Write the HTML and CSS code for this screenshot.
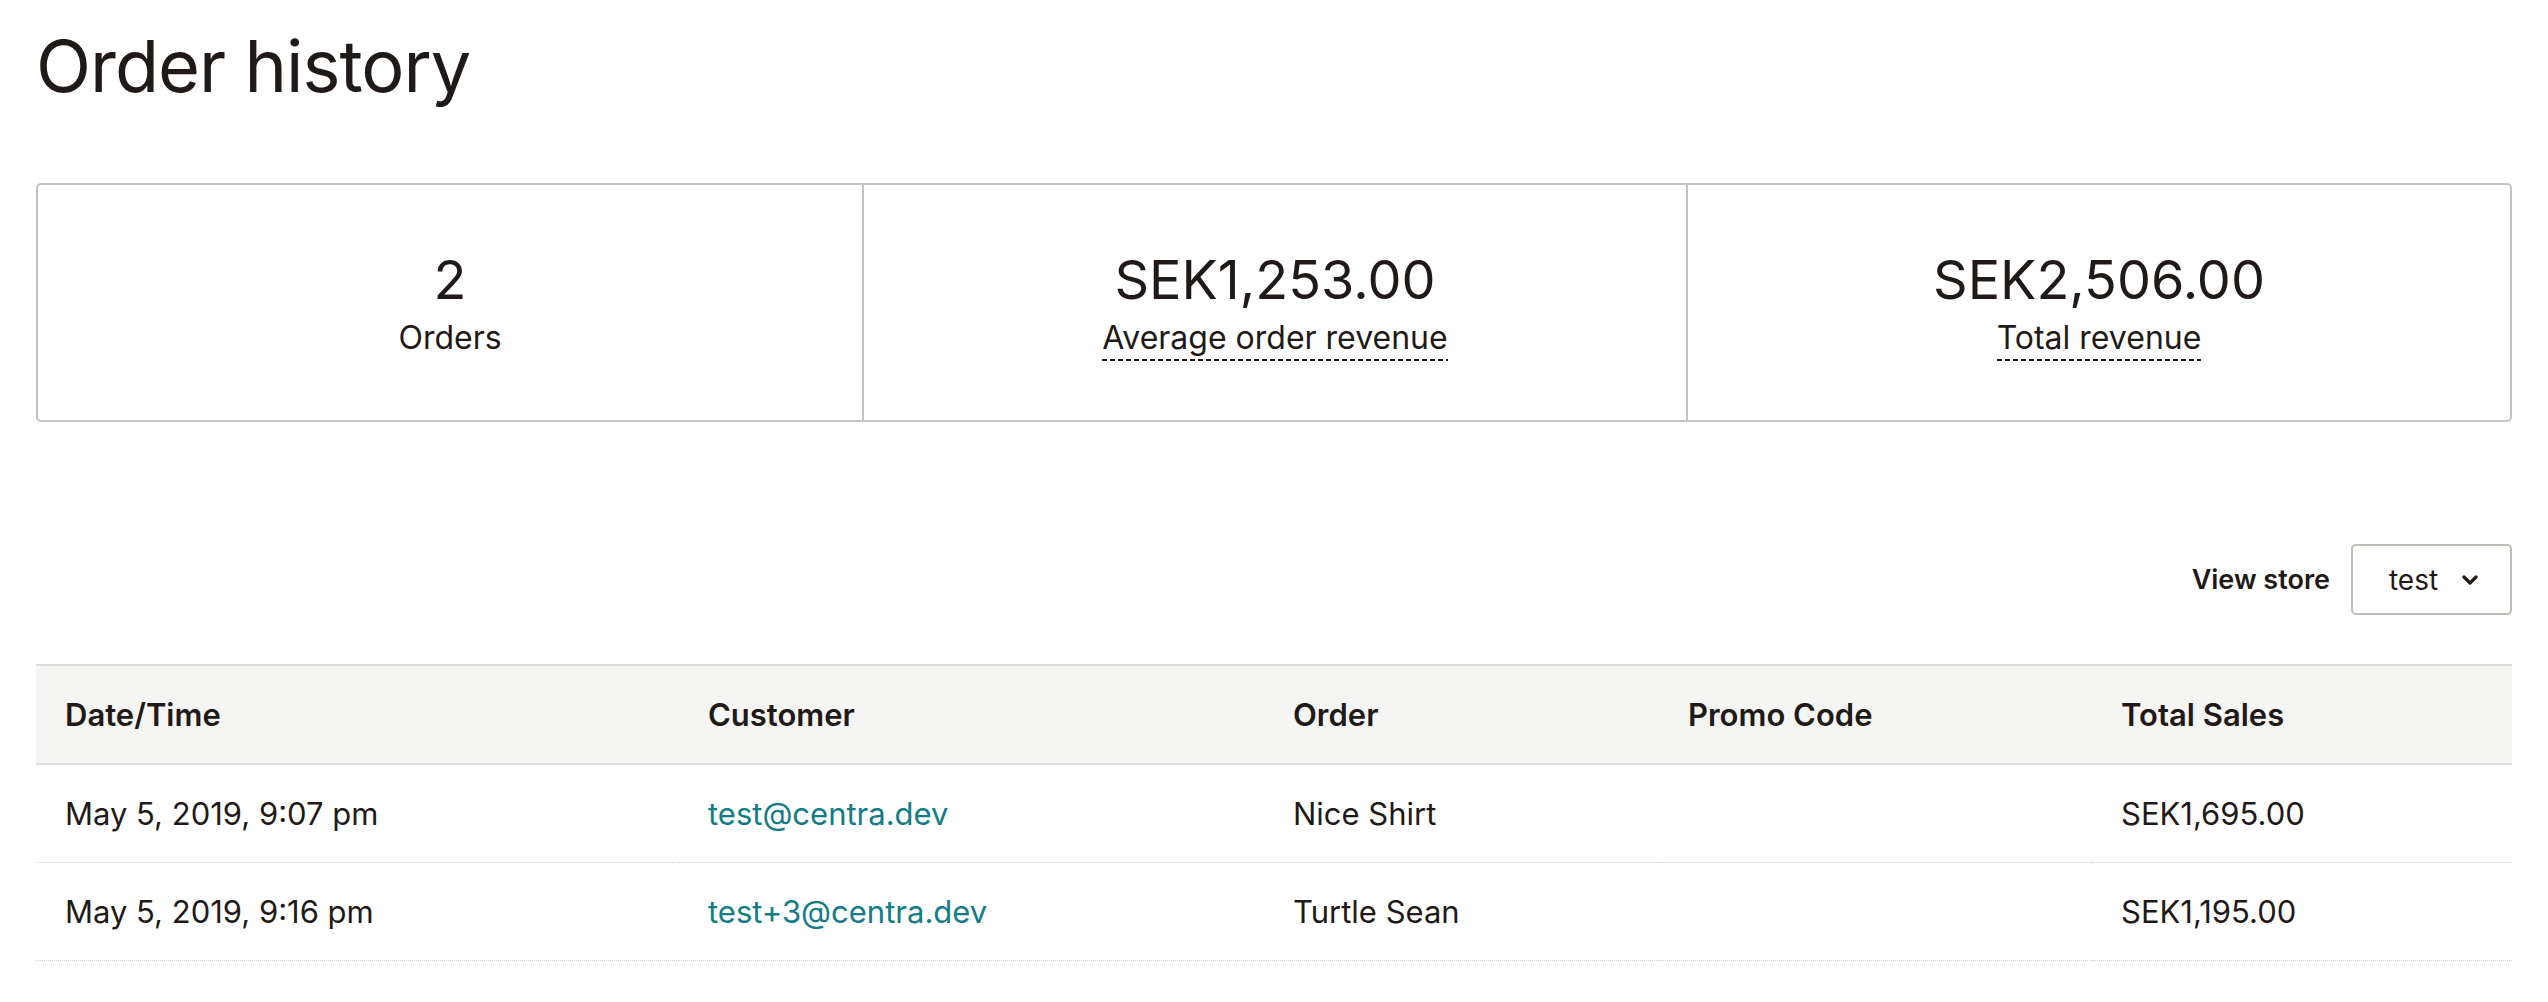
FILE: index.html
```html
<!DOCTYPE html>
<html lang="en">
<head>
<meta charset="utf-8">
<title>Order history</title>
<link rel="stylesheet" href="styles.css">
</head>
<body>
<main class="page">
  <h1 class="title">Order history</h1>

  <section class="stats">
    <div class="stat">
      <div class="stat-value">2</div>
      <div class="stat-label">Orders</div>
    </div>
    <div class="stat">
      <div class="stat-value">SEK1,253.00</div>
      <div class="stat-label"><span class="dashed">Average order revenue</span></div>
    </div>
    <div class="stat">
      <div class="stat-value">SEK2,506.00</div>
      <div class="stat-label"><span class="dashed">Total revenue</span></div>
    </div>
  </section>

  <div class="toolbar">
    <span class="toolbar-label">View store</span>
    <div class="select">
      <span class="select-text">test</span>
      <svg class="chevron" width="16" height="10" viewBox="0 0 16 10" aria-hidden="true">
        <path d="M2 2 L8 8 L14 2" fill="none" stroke="#1f1a17" stroke-width="3.2" stroke-linecap="round" stroke-linejoin="round"/>
      </svg>
    </div>
  </div>

  <table class="orders">
    <colgroup>
      <col class="c1"><col class="c2"><col class="c3"><col class="c4"><col class="c5">
    </colgroup>
    <thead>
      <tr>
        <th>Date/Time</th>
        <th>Customer</th>
        <th>Order</th>
        <th>Promo Code</th>
        <th>Total Sales</th>
      </tr>
    </thead>
    <tbody>
      <tr>
        <td>May 5, 2019, 9:07 pm</td>
        <td><a class="link" href="#">test@centra.dev</a></td>
        <td>Nice Shirt</td>
        <td></td>
        <td>SEK1,695.00</td>
      </tr>
      <tr>
        <td>May 5, 2019, 9:16 pm</td>
        <td><a class="link" href="#">test+3@centra.dev</a></td>
        <td>Turtle Sean</td>
        <td></td>
        <td>SEK1,195.00</td>
      </tr>
    </tbody>
  </table>
</main>
</body>
</html>
```

FILE: styles.css
```css
* { box-sizing: border-box; }

html, body {
  margin: 0;
  padding: 0;
  background: #ffffff;
}

body {
  font-family: Inter, "Noto Sans", "Liberation Sans", sans-serif;
  color: #1f1a17;
}

.page {
  padding: 0 36px;
}

.title {
  margin: 0;
  padding-top: 30px;
  font-size: 72px;
  line-height: 72px;
  font-weight: 400;
  letter-spacing: -1px;
}

.stats {
  margin-top: 81px;
  display: grid;
  grid-template-columns: 1fr 1fr 1fr;
  height: 239px;
  border: 2px solid #c4c4c4;
  border-radius: 5px;
}

.stat {
  display: flex;
  flex-direction: column;
  align-items: center;
  justify-content: center;
  padding-top: 2px;
}

.stat + .stat {
  border-left: 2px solid #c4c4c4;
}

.stat-value {
  font-size: 54px;
  line-height: 60px;
  font-weight: 400;
}

.stat-label {
  margin-top: 8px;
  font-size: 32px;
  line-height: 40px;
}

.dashed {
  padding-bottom: 4px;
  background-image: repeating-linear-gradient(to right, #1f1a17 0 5px, transparent 5px 8px);
  background-size: 100% 2px;
  background-repeat: no-repeat;
  background-position: left bottom;
}

.toolbar {
  margin-top: 122px;
  display: flex;
  justify-content: flex-end;
  align-items: center;
  gap: 21px;
}

.toolbar-label {
  font-size: 27px;
  font-weight: 600;
}

.select {
  width: 161px;
  height: 71px;
  border: 2px solid #c0bcb8;
  border-radius: 5px;
  display: flex;
  align-items: center;
  justify-content: center;
  gap: 24px;
  padding-left: 4px;
}

.select-text {
  font-size: 28px;
}

.chevron {
  display: block;
}

.orders {
  margin-top: 49px;
  width: 100%;
  border-collapse: collapse;
  table-layout: fixed;
}

.c1 { width: 643px; }
.c2 { width: 585px; }
.c3 { width: 395px; }
.c4 { width: 433px; }
.c5 { width: auto; }

.orders th {
  background: #f5f5f3;
  border-top: 2px solid #dddddb;
  border-bottom: 2px solid #dddddb;
  height: 99px;
  padding: 0 29px;
  text-align: left;
  font-size: 31px;
  font-weight: 600;
}

.orders td {
  height: 98px;
  padding: 0 29px;
  font-size: 31px;
  border-bottom: 1px dotted #cfcfcf;
}

.link {
  color: #137c84;
  text-decoration: none;
}
```
